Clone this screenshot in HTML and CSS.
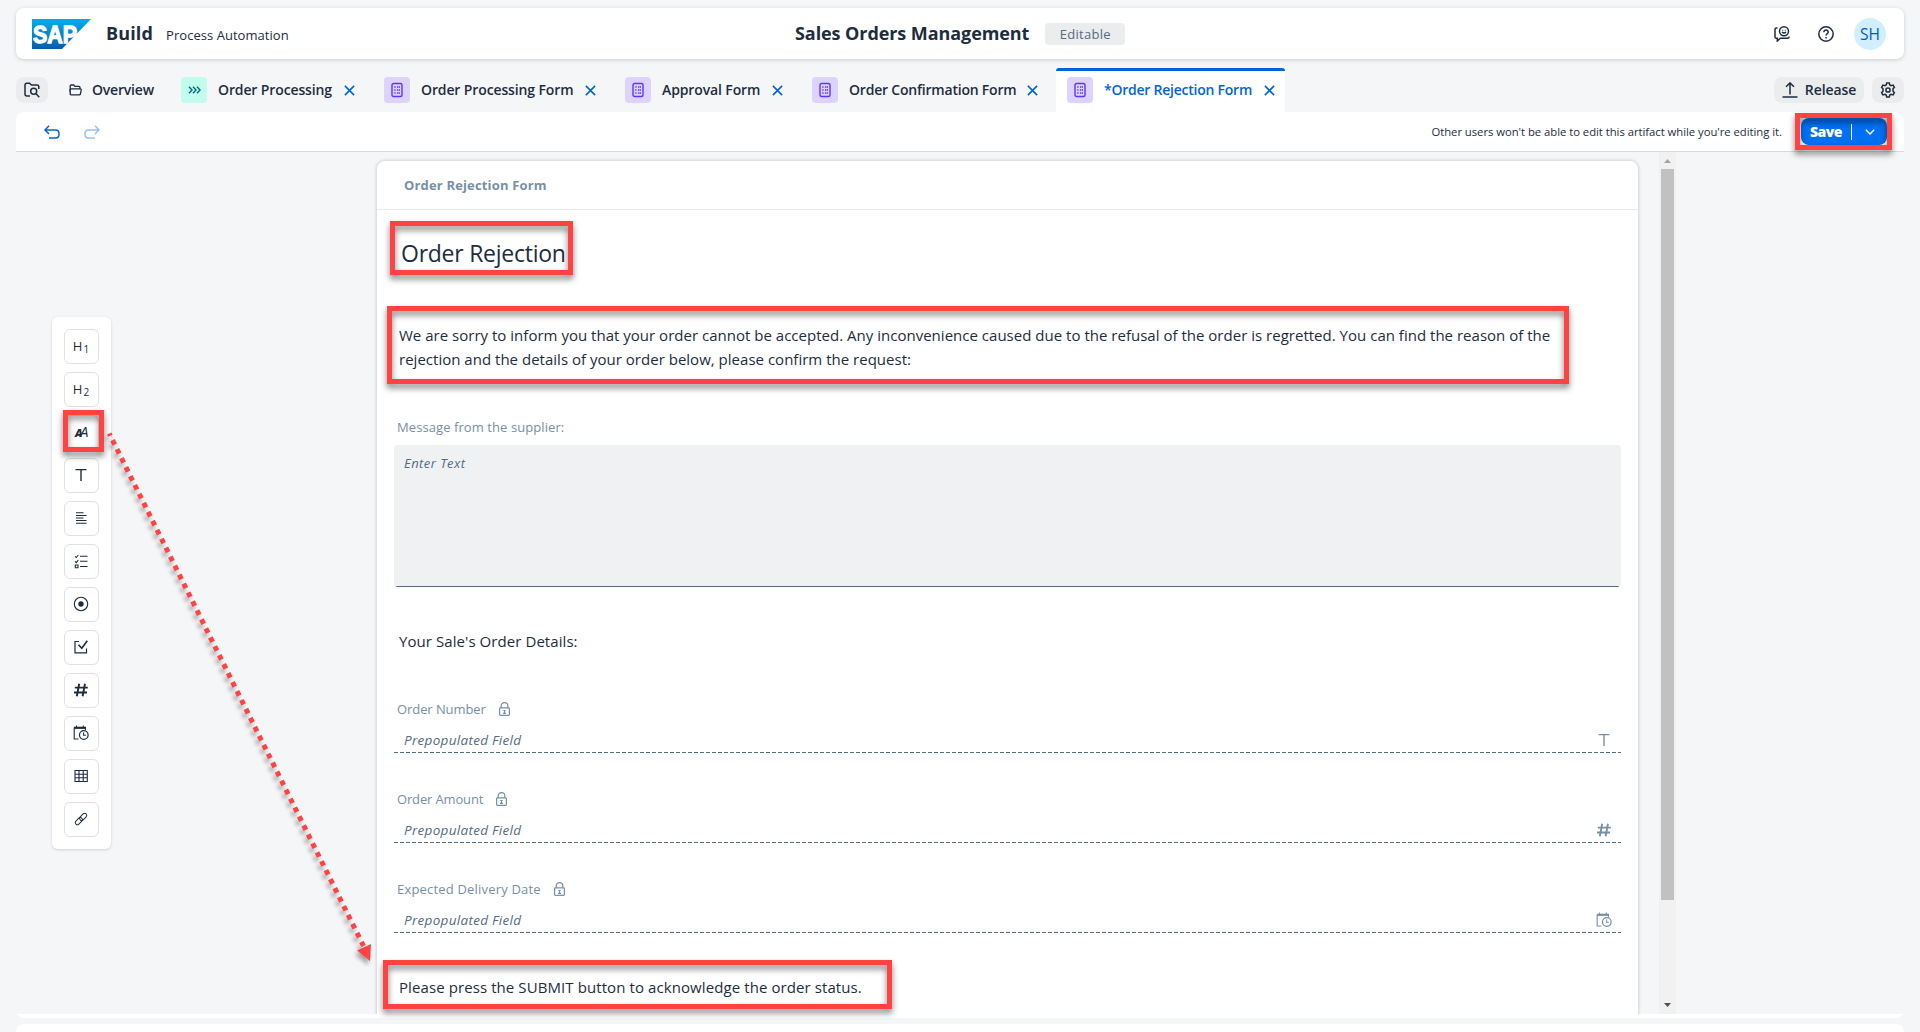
FILE: index.html
```html
<!DOCTYPE html>
<html lang="en">
<head>
<meta charset="utf-8">
<title>Sales Orders Management</title>
<link rel="stylesheet" href="styles.css">
</head>
<body>
<svg class="defs" aria-hidden="true">
  <symbol id="close" viewBox="0 0 11 11"><path d="M.9.9l9.200 9.200M10.100.9L.9 10.100"/></symbol>
  <symbol id="form" viewBox="0 0 12 16"><rect x="1" y="1.500" width="10" height="13" rx="1.500" fill="none" stroke="currentColor" stroke-width="1.400"/><path d="M3.300 5h1.400M6 5h3M3.300 8h1.400M6 8h3M3.300 11h1.400M6 11h3" stroke="currentColor" stroke-width="1.400" stroke-dasharray="1.300 .5"/></symbol>
  <symbol id="lock" viewBox="0 0 11 14"><path d="M2.200 6V3.600C2.200 1.700 3.700.7 5.500.7s3.300 1 3.300 2.900V6" stroke-width="1.200"/><rect x=".6" y="5.900" width="9.800" height="7.500" rx=".8" stroke-width="1.200"/><path d="M4.300 8.500h2.400M5.500 8.500v3M4 11.300h3" stroke-width="1.200"/></symbol>
  <symbol id="text" viewBox="0 0 16 16"><path d="M2.500 2.600h11M8 2.600v11.400"/></symbol>
  <symbol id="hash" viewBox="0 0 16 16"><path d="M6.200 1.800L3.800 14.200M12 1.800L9.600 14.200M1.800 5.600h13M1 10.500h13" stroke-width="1.900"/></symbol>
  <symbol id="date" viewBox="0 0 16 16"><path d="M5.500 14H1.200V2.500M12.500 2.500V5" stroke-width="1.100"/><path d="M1 2.800h12" stroke-width="2.200"/><path d="M3.500.6v2M10.300.6v2" stroke-width="1.100"/><circle cx="10.800" cy="10" r="4.300" stroke-width="1.200"/><path d="M10.600 7.500v2.700h2.200" stroke-width="1.100"/></symbol>
</svg>

<header class="shell">
  <svg class="logo" viewBox="0 0 59 30">
    <defs><linearGradient id="sap" x1="0" y1="0" x2="0" y2="1"><stop offset="0" stop-color="#00aeef"/><stop offset="1" stop-color="#0a5cab"/></linearGradient></defs>
    <path d="M0 0h59L30 30H0z" fill="url(#sap)"/>
    <text class="logo-text" x="1" y="23.500" textLength="44" lengthAdjust="spacingAndGlyphs">SAP</text>
  </svg>
  <span class="product">Build</span>
  <span class="variant">Process Automation</span>
  <div class="project"><h1 class="project-name">Sales Orders Management</h1><span class="badge">Editable</span></div>
  <div class="shell-tools">
    <svg class="ic" viewBox="0 0 16 16"><path d="M3.500 2H2.300Q1 2 1 3.300V11Q1 12.300 2.300 12.300H3.300V15L6.300 12.300H13.700Q15 12.300 15 11V10.500"/><circle cx="10" cy="5.300" r="4.500"/><path d="M8 6q2 2 4 0M8.600 3.800v.8M11.400 3.800v.8"/></svg>
    <svg class="ic help" viewBox="0 0 16 16"><circle cx="8" cy="8" r="7.200"/><path d="M5.800 6.200c.1-3 4.500-2.700 4.400 0 0 1.400-2.100 1.600-2.100 3.200M8.100 10.900v1.500"/></svg>
    <span class="avatar">SH</span>
  </div>
</header>

<nav class="tabs">
  <span class="tool"><svg class="ic" viewBox="0 0 16 16"><path d="M6 14H3Q1 14 1 12V3Q1 1.200 2.700 1.200H5.500L7.500 3H13Q14.800 3 14.800 4.800V7"/><circle cx="9.700" cy="9.300" r="3"/><path d="M12 11.700l3.300 3.500"/></svg></span>
  <span class="overview"><svg class="folder" viewBox="0 0 13 12"><path d="M1.200 10.500V2Q1.200 1 2.200 1h2.500l1.200 1.400h4Q11 2.400 11 3.400v1.400M1.500 11L.8 6Q.7 4.900 1.800 4.900h9.500q1.100 0 .9 1.100l-.8 4q-.2.900-1.200.9H2.200q-.7 0-.7-.4"/></svg>Overview</span>
  <div class="tab t1"><span class="tile process"><svg viewBox="0 0 13 10"><path d="M1 1.800L4 5 1 8.200M5 1.800L8 5 5 8.200M9 1.800L12 5 9 8.200"/></svg></span><span class="name">Order Processing</span><svg class="x"><use href="#close"/></svg></div>
  <div class="tab t2"><span class="tile"><svg><use href="#form"/></svg></span><span class="name">Order Processing Form</span><svg class="x"><use href="#close"/></svg></div>
  <div class="tab t3"><span class="tile"><svg><use href="#form"/></svg></span><span class="name">Approval Form</span><svg class="x"><use href="#close"/></svg></div>
  <div class="tab t4"><span class="tile"><svg><use href="#form"/></svg></span><span class="name">Order Confirmation Form</span><svg class="x"><use href="#close"/></svg></div>
  <div class="tab t5 active"><span class="tile"><svg><use href="#form"/></svg></span><span class="name">*Order Rejection Form</span><svg class="x"><use href="#close"/></svg></div>
  <div class="tab-tools">
    <span class="tool release"><svg class="ic" viewBox="0 0 16 16"><path d="M.5 15h15M8 12.500V1M4 4.800L8 .9l4 3.900"/></svg>Release</span>
    <span class="tool"><svg class="ic" viewBox="0 0 16 16"><path d="M6.700.9h2.600l.5 2 1.300.8 2-.6 1.300 2.300L13 6.800v2.400l1.400 1.400-1.300 2.300-2-.6-1.300.8-.5 2H6.700l-.5-2-1.300-.8-2 .6-1.300-2.300L3 9.200V6.800L1.600 5.400l1.300-2.300 2 .6 1.300-.8z"/><circle cx="8" cy="8" r="2.100"/></svg></span>
  </div>
</nav>

<main class="editor">
  <div class="toolbar">
    <svg class="undo" viewBox="0 0 16 14"><path d="M5 .8L1 5l4 4M1.300 5H11.500Q15 5 15 8.500V9.500Q15 13 11.500 13H5"/></svg>
    <svg class="undo redo" viewBox="0 0 16 14"><path d="M11 .8L15 5l-4 4M14.700 5H4.500Q1 5 1 8.500V9.500Q1 13 4.500 13H11"/></svg>
    <span class="notice">Other users won't be able to edit this artifact while you're editing it.</span>
    <span class="save">Save<i class="divider"></i><svg class="chevron" viewBox="0 0 10 6"><path d="M.8.7L5 5 9.200.7"/></svg></span>
  </div>

  <div class="canvas">
    <aside class="palette">
      <span class="item"><span class="h">H<small>1</small></span></span>
      <span class="item"><span class="h">H<small>2</small></span></span>
      <span class="item"><span class="aa"><b>A</b><i>A</i></span></span>
      <span class="item"><svg class="pi"><use href="#text"/></svg></span>
      <span class="item"><svg class="pi" viewBox="0 0 16 16"><path d="M3 2.800h7.500M3 5.500h10.500M3 8h7.500M3 10.500h10.500M3 13.200h10.500" stroke-width="1.100"/></svg></span>
      <span class="item"><svg class="pi" viewBox="0 0 16 16"><path d="M7 3.200h7.500M7 8.300h7.500M7 13.500h7.500M2 3.300l1.300 1.200L5.300 2M2 8.400l1.300 1.200L5.300 7M2.300 12h2.700v2.700H2.300z" stroke-width="1.100"/></svg></span>
      <span class="item"><svg class="pi" viewBox="0 0 16 16"><circle cx="8" cy="8" r="6.700" stroke-width="1.100"/><circle cx="8" cy="8" r="2.700" fill="currentColor" stroke="none"/></svg></span>
      <span class="item"><svg class="pi" viewBox="0 0 16 16"><path d="M6 2.500H2v11.300h11.500V9.500" stroke-width="1.200"/><path d="M5.500 5.800l3.300 3.500 5.500-7.500" stroke-width="1.600"/></svg></span>
      <span class="item"><svg class="pi"><use href="#hash"/></svg></span>
      <span class="item"><svg class="pi"><use href="#date"/></svg></span>
      <span class="item"><svg class="pi" viewBox="0 0 16 16"><path d="M2 2.500h12.300v11H2zM2 6.200h12.300M2 9.800h12.300M6 2.500v11M10.200 2.500v11" stroke-width="1.100"/></svg></span>
      <span class="item"><svg class="pi" viewBox="0 0 16 16"><g transform="rotate(-45 8 8)" stroke-width="1"><rect x=".8" y="5.900" width="8.300" height="4.200" rx="2.100"/><rect x="6.900" y="5.900" width="8.300" height="4.200" rx="2.100"/></g></svg></span>
    </aside>

    <section class="card">
      <div class="card-head">Order Rejection Form</div>
      <h2 class="headline">Order Rejection</h2>
      <p class="para intro">We are sorry to inform you that your order cannot be accepted. Any inconvenience caused due to the refusal of the order is regretted. You can find the reason of the<br>rejection and the details of your order below, please confirm the request:</p>
      <div class="label message">Message from the supplier:</div>
      <div class="area">Enter Text</div>
      <p class="para details">Your Sale's Order Details:</p>
      <div class="field"><div class="label"><span class="ln">Order Number</span><svg class="lock"><use href="#lock"/></svg></div><div class="input"><span class="ph">Prepopulated Field</span><svg class="pi"><use href="#text"/></svg></div></div>
      <div class="field"><div class="label"><span class="la">Order Amount</span><svg class="lock"><use href="#lock"/></svg></div><div class="input"><span class="ph">Prepopulated Field</span><svg class="pi"><use href="#hash"/></svg></div></div>
      <div class="field"><div class="label"><span class="ld">Expected Delivery Date</span><svg class="lock"><use href="#lock"/></svg></div><div class="input"><span class="ph">Prepopulated Field</span><svg class="pi"><use href="#date"/></svg></div></div>
      <p class="para submit">Please press the SUBMIT button to acknowledge the order status.</p>
    </section>

    <div class="scrollbar"><i class="up"></i><i class="thumb"></i><i class="down"></i></div>
  </div>
</main>
<footer class="panel"></footer>

<div class="mark m-save"></div>
<div class="mark m-tool"></div>
<div class="mark m-headline"></div>
<div class="mark m-intro"></div>
<div class="mark m-submit"></div>
<svg class="arrow" viewBox="0 0 290 550"><path d="M9.200 13.500L263.500 526" fill="none" stroke="#ff4343" stroke-width="5" stroke-dasharray="5 5" stroke-dashoffset="2.500"/><path d="M257 530.500L271 524l-1 17z" fill="#ff4343"/></svg>
</body>
</html>
```
FILE: styles.css
```css
* { box-sizing: border-box; }
body {
  margin: 0;
  height: 1032px;
  padding: 8px 16px 0;
  overflow: hidden;
  display: flex;
  flex-direction: column;
  background: #f5f6f8;
  color: #1d2d3e;
  font: 13px/18px "Open Sans", sans-serif;
}
h1, h2, p { margin: 0; font-weight: 400; }
svg { flex: none; fill: none; stroke: currentColor; }
.defs { position: absolute; width: 0; height: 0; }
.ic { width: 16px; height: 16px; stroke-width: 1.5; }

/* Shell header */
.shell {
  position: relative;
  flex: none;
  height: 51px;
  display: flex;
  align-items: center;
  padding: 0 18px 0 16px;
  background: #fff;
  border-radius: 8px;
  box-shadow: 0 1px 4px rgba(34, 53, 72, .2);
}
.logo { width: 59px; height: 30px; stroke: none; }
.logo-text {
  fill: #fff;
  stroke: #fff;
  stroke-width: 1.3px;
  font: 700 24px "Liberation Sans", sans-serif;
}
.product { margin: -2px 0 0 15px; font-size: 18px; font-weight: 700; letter-spacing: .15px; }
.variant { margin: 2px 0 0 13px; letter-spacing: .04px; }
.project {
  position: absolute;
  left: 779px;
  display: flex;
  align-items: center;
  gap: 16px;
}
.project-name { margin-top: -2px; font-size: 18px; font-weight: 700; letter-spacing: -.08px; white-space: nowrap; }
.badge {
  width: 80px;
  height: 22px;
  border-radius: 4px;
  background: #eaecee;
  color: #556b82;
  text-align: center;
  line-height: 22px;
  letter-spacing: .28px;
}
.shell-tools { margin-left: auto; display: flex; align-items: center; }
.help { margin-left: 28px; }
.avatar {
  width: 32px;
  height: 32px;
  margin-left: 20px;
  border-radius: 50%;
  background: #d1efff;
  color: #0057d2;
  text-align: center;
  font-size: 15.5px;
  line-height: 32px;
}

/* Tab strip */
.tabs {
  flex: none;
  height: 44px;
  margin-top: 9px;
  display: flex;
  align-items: center;
  font-size: 14px;
  font-weight: 600;
}
.tool {
  width: 32px;
  height: 26px;
  display: flex;
  align-items: center;
  justify-content: center;
  border-radius: 8px;
  background: #eaecee;
}
.overview {
  width: 122px;
  padding-left: 21px;
  display: flex;
  align-items: center;
  gap: 10px;
  letter-spacing: -.2px;
}
.folder { width: 13px; height: 12px; stroke-width: 1.3; }
.tab {
  height: 44px;
  margin-right: 8px;
  padding: 0 10px 0 11px;
  display: flex;
  align-items: center;
  white-space: nowrap;
}
.t1 { width: 195px; letter-spacing: -.12px; }
.t2 { width: 233px; letter-spacing: -.12px; }
.t3 { width: 179px; letter-spacing: -.12px; }
.t4 { width: 247px; letter-spacing: -.21px; }
.t5 { width: 229px; letter-spacing: -.24px; }
.active {
  background: linear-gradient(#0064d9 3px, #fff 3px);
  border-radius: 3px 3px 0 0;
  color: #0064d9;
}
.tile {
  width: 26px;
  height: 26px;
  margin-right: 11px;
  display: flex;
  align-items: center;
  justify-content: center;
  border-radius: 4px;
  background: #ded3ff;
  color: #5d36ff;
}
.tile svg { width: 12px; height: 16px; }
.process { background: #c2fcee; color: #046c7a; }
.process svg { width: 13px; height: 10px; stroke-width: 1.4; }
.x { width: 11px; height: 11px; margin-left: auto; color: #0064d9; stroke-width: 1.6; }
.tab-tools { margin-left: auto; display: flex; gap: 8px; }
.release { width: 90px; gap: 7px; letter-spacing: -.08px; }

/* Editor */
.editor {
  flex: none;
  height: 906px;
  background: #fff;
  border-radius: 8px;
  overflow: hidden;
}
.toolbar {
  height: 40px;
  padding: 0 17px 0 28px;
  display: flex;
  align-items: center;
  border-bottom: 1px solid #d9dbdd;
}
.undo { width: 16px; height: 14px; margin-top: 1px; color: #0064d9; stroke-width: 1.5; }
.redo { margin-left: 24px; opacity: .4; }
.notice { margin: 0 19px 0 auto; font-size: 11.3px; letter-spacing: -.035px; }
.save {
  width: 86px;
  height: 27px;
  padding-left: 9px;
  display: flex;
  align-items: center;
  border-radius: 8px;
  background: #0070f2;
  color: #fff;
  font-size: 14px;
  font-weight: 800;
  letter-spacing: -.5px;
}
.divider { width: 1px; height: 16px; margin: 0 13px 0 9px; background: #fff; }
.chevron { width: 10px; height: 6px; stroke-width: 1.4; }
.canvas {
  height: 862px;
  display: flex;
  align-items: flex-start;
  overflow: hidden;
  background: #f5f6f8;
}
.palette {
  width: 59px;
  height: 532px;
  margin: 165px 0 0 36px;
  padding: 12px;
  display: grid;
  gap: 8px;
  background: #fff;
  border-radius: 6px;
  box-shadow: 0 1px 3px rgba(34, 53, 72, .18);
}
.item {
  height: 35px;
  padding: 0 1px 1px 0;
  display: flex;
  align-items: center;
  justify-content: center;
  border: 1px solid #dfe1e6;
  border-radius: 6px;
}
.pi { width: 16px; height: 16px; stroke-width: 1.4; }
.h { font-size: 13px; }
.h small { position: relative; top: 2px; margin-left: 1px; font-size: 10px; }
.aa { font-size: 12px; letter-spacing: -2.5px; padding-right: 1px; }
.aa b { font-size: 11px; font-weight: 800; font-style: italic; }
.aa i { font-size: 15px; font-weight: 400; }

/* Form card */
.card {
  width: 1261px;
  height: 870px;
  margin: 9px 0 0 266px;
  padding: 0 17px;
  background: #fff;
  border-radius: 8px;
  box-shadow: 0 0 3px 1px rgba(34, 53, 72, .18);
}
.card-head {
  height: 49px;
  margin: 0 -17px;
  padding-left: 27px;
  border-bottom: 1px solid #e8eaec;
  color: #788fa6;
  font-weight: 700;
  line-height: 48px;
  letter-spacing: .16px;
}
.headline {
  margin: 27px 0 0 7px;
  font-size: 23px;
  line-height: 32px;
  letter-spacing: -.25px;
}
.para { margin-left: 5px; font-size: 15px; line-height: 24px; letter-spacing: .015px; white-space: nowrap; }
.intro { margin-top: 54px; }
.label { display: flex; align-items: center; height: 18px; padding-left: 3px; color: #788fa6; }
.message { margin-top: 47px; letter-spacing: .08px; }
.area {
  height: 142px;
  margin-top: 9px;
  padding: 9px 10px;
  border-radius: 4px;
  background: linear-gradient(#556b82, #556b82) center bottom / calc(100% - 4px) 1px no-repeat #eff1f2;
  color: #556b82;
  font-style: italic;
  letter-spacing: .45px;
}
.details { margin: 42px 0 47px 5px; letter-spacing: .07px; }
.field { height: 90px; }
.ln { letter-spacing: -.08px; }
.la { letter-spacing: -.15px; }
.ld { letter-spacing: .19px; }
.lock { width: 11px; height: 14px; margin: -1px 0 0 13px; }
.input {
  height: 35px;
  padding: 8px 9px 0 10px;
  display: flex;
  align-items: center;
  justify-content: space-between;
  color: #788fa6;
  background: repeating-linear-gradient(90deg, #556b82 0 4px, transparent 4px 6px) bottom / 100% 1px no-repeat;
}
.ph { color: #556b82; font-size: 13.5px; font-style: italic; letter-spacing: .3px; }
.submit { margin-top: 5px; letter-spacing: .09px; }

/* Scrollbar */
.scrollbar {
  width: 17px;
  height: 862px;
  margin-left: 21px;
  padding: 7px 0;
  display: flex;
  flex-direction: column;
  align-items: center;
  background: #f1f1f1;
}
.up, .down { width: 7px; height: 4px; background: #a3a3a3; clip-path: polygon(50% 0, 100% 100%, 0 100%); }
.thumb { width: 13px; height: 731px; margin-top: 6px; background: #c1c1c1; }
.down { margin-top: auto; background: #505050; clip-path: polygon(0 0, 100% 0, 50% 100%); }
.panel { flex: none; height: 20px; margin-top: 6px; background: #fff; border-radius: 8px 8px 0 0; }

/* Annotations over the page */
.mark {
  position: absolute;
  border: 5px solid #ff4343;
  filter: drop-shadow(0 4px 3px rgba(0, 0, 0, .5));
}
.m-save { left: 1795px; top: 113px; width: 97px; height: 37px; }
.m-tool { left: 63px; top: 410px; width: 41px; height: 42px; }
.m-headline { left: 390px; top: 221px; width: 183px; height: 54px; }
.m-intro { left: 387px; top: 306px; width: 1182px; height: 78px; }
.m-submit { left: 383px; top: 960px; width: 509px; height: 49px; }
.arrow {
  position: absolute;
  left: 100px;
  top: 420px;
  width: 290px;
  height: 550px;
  stroke: none;
  filter: drop-shadow(-2px 4px 2px rgba(0, 0, 0, .35));
}
```
